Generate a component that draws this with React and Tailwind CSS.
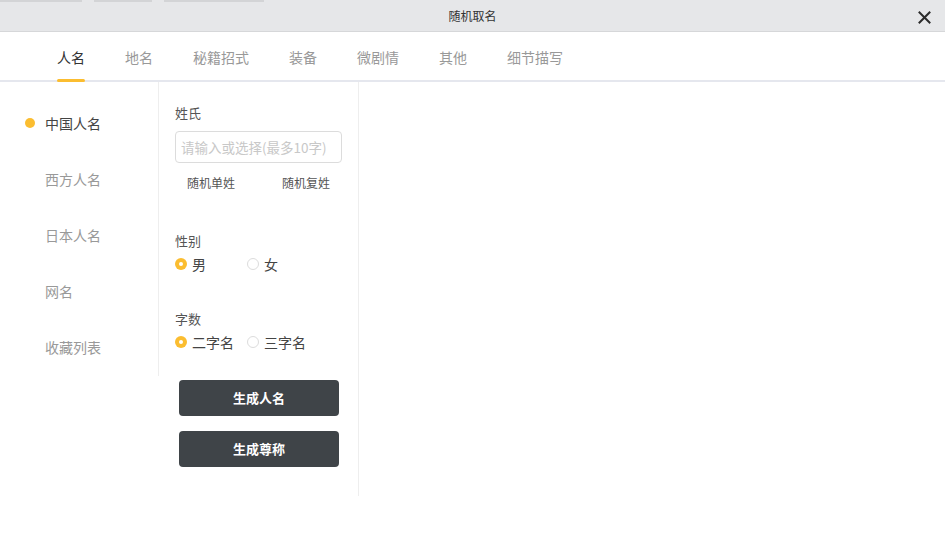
import { useState } from 'react'

const tabs = ['人名', '地名', '秘籍招式', '装备', '微剧情', '其他', '细节描写']
const kinds = ['中国人名', '西方人名', '日本人名', '网名', '收藏列表']

function Radio({ checked, label, onClick, className = '' }) {
  return (
    <button onClick={onClick} className={`flex items-center gap-[5px] ${className}`}>
      <span
        className={`w-[12px] h-[12px] rounded-full flex items-center justify-center ${
          checked ? 'bg-[#fbbd30]' : 'border border-[#dcdcdc] bg-white'
        }`}
      >
        {checked && <span className="w-[4px] h-[4px] rounded-full bg-white" />}
      </span>
      <span className="text-[14px] text-[#444]">{label}</span>
    </button>
  )
}

export default function App() {
  const [tab, setTab] = useState(0)
  const [kind, setKind] = useState(0)
  const [gender, setGender] = useState('m')
  const [len, setLen] = useState(2)

  return (
    <div
      className="w-[945px] h-[558px] bg-white overflow-hidden flex flex-col"
      style={{ fontFamily: '"Noto Sans CJK SC", "Noto Sans", sans-serif' }}
    >
      {/* Title bar */}
      <div className="relative h-[32px] shrink-0 bg-[#e6e7e9] border-b border-[#d6d7d9] flex items-center justify-center">
        <div className="absolute top-0 left-0 flex h-[2px]">
          <div className="w-[82px] bg-[#d3d4d6]" />
          <div className="w-[12px]" />
          <div className="w-[58px] bg-[#d3d4d6]" />
          <div className="w-[12px]" />
          <div className="w-[100px] bg-[#d3d4d6]" />
        </div>
        <span className="text-[12px] text-[#333]">随机取名</span>
        <button className="absolute right-[14px] top-[11px] text-[#333]">
          <svg width="13" height="13" viewBox="0 0 13 13">
            <path d="M1.5 1.5L11.5 11.5M11.5 1.5L1.5 11.5" stroke="#2b2b2b" strokeWidth="2" strokeLinecap="square" />
          </svg>
        </button>
      </div>

      {/* Tabs */}
      <div className="h-[50px] shrink-0 border-b-2 border-[#e5e7ee] flex items-end pl-[57px] gap-[40px]">
        {tabs.map((t, i) => (
          <button key={t} onClick={() => setTab(i)} className="relative h-full flex items-center pt-[2px]">
            <span className={`text-[14px] ${tab === i ? 'text-[#333]' : 'text-[#999]'}`}>{t}</span>
            {tab === i && (
              <span className="absolute left-0 right-0 bottom-[-2px] h-[3px] rounded-full bg-[#fbbd30]" />
            )}
          </button>
        ))}
      </div>

      <div className="flex items-start">
        {/* Sidebar */}
        <div className="w-[159px] h-[294px] border-r border-[#eeeeee] pt-[30px]">
          {kinds.map((k, i) => (
            <button
              key={k}
              onClick={() => setKind(i)}
              className="h-[56px] w-full flex items-start pl-[25px]"
            >
              <span className={`mt-[6px] w-[10px] h-[10px] rounded-full ${kind === i ? 'bg-[#fbbd30]' : ''}`} />
              <span className={`ml-[10px] text-[14px] leading-[22px] ${kind === i ? 'text-[#444]' : 'text-[#999]'}`}>{k}</span>
            </button>
          ))}
        </div>

        {/* Options */}
        <div className="w-[200px] h-[414px] border-r border-[#eeeeee] pl-[16px] pr-[16px] pt-[21px]">
          <div className="text-[13px] text-[#555] leading-[20px]">姓氏</div>
          <input
            placeholder="请输入或选择(最多10字)"
            className="mt-[8px] w-[167px] h-[32px] border border-[#dcdcdc] rounded-[4px] px-[5px] text-[13.5px] placeholder:text-[#c8c8c8] outline-none"
          />
          <div className="flex mt-[11px] text-[12px] text-[#555]">
            <button className="ml-[12px]">随机单姓</button>
            <button className="ml-[47px]">随机复姓</button>
          </div>

          <div className="mt-[39px] text-[13px] text-[#555] leading-[20px]">性别</div>
          <div className="flex mt-[2px] h-[22px] items-center">
            <Radio checked={gender === 'm'} label="男" onClick={() => setGender('m')} />
            <Radio checked={gender === 'f'} label="女" onClick={() => setGender('f')} className="ml-[41px]" />
          </div>

          <div className="mt-[34px] text-[13px] text-[#555] leading-[20px]">字数</div>
          <div className="flex mt-[2px] h-[22px] items-center">
            <Radio checked={len === 2} label="二字名" onClick={() => setLen(2)} />
            <Radio checked={len === 3} label="三字名" onClick={() => setLen(3)} className="ml-[13px]" />
          </div>

          <div className="mt-[27px] ml-[4px] flex flex-col gap-[15px]">
            <button className="w-[160px] h-[36px] rounded-[4px] bg-[#3f4448] text-white text-[13px] font-bold">生成人名</button>
            <button className="w-[160px] h-[36px] rounded-[4px] bg-[#3f4448] text-white text-[13px] font-bold">生成尊称</button>
          </div>
        </div>

        <div className="flex-1" />
      </div>
    </div>
  )
}
